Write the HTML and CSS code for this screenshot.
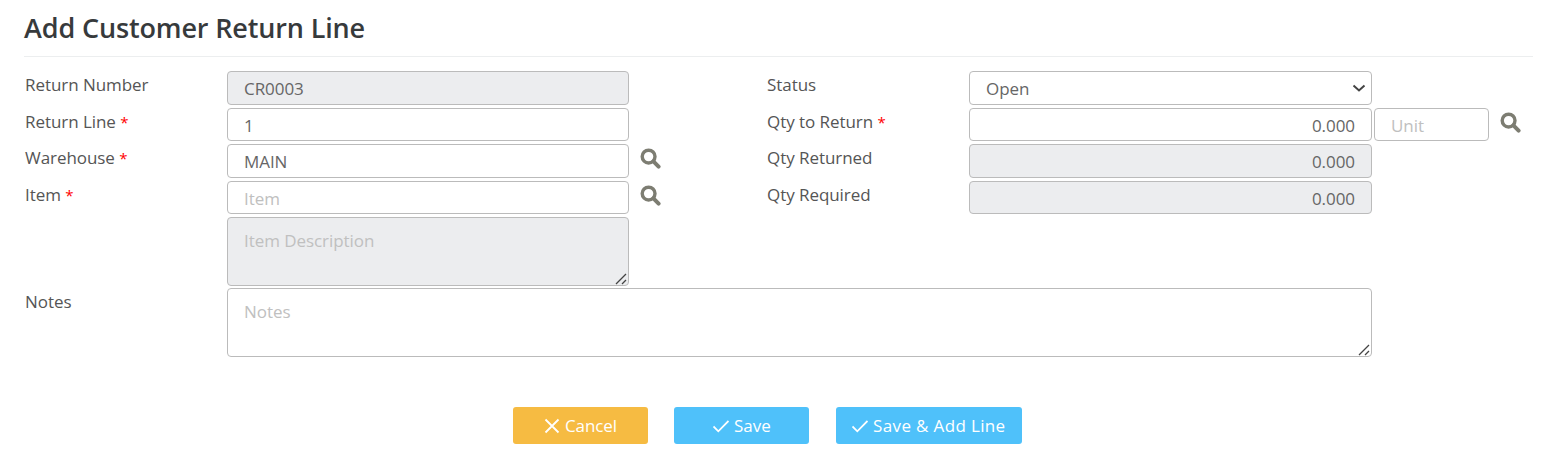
FILE: index.html
```html
<!DOCTYPE html>
<html lang="en">
<head>
<meta charset="utf-8">
<title>Add Customer Return Line</title>
<link rel="stylesheet" href="styles.css">
</head>
<body>
<svg class="defs" width="0" height="0" aria-hidden="true">
  <symbol id="search" viewBox="0 0 21 21">
    <circle cx="8.6" cy="8.6" r="6.4" fill="none" stroke="currentColor" stroke-width="3.4"/>
    <path d="M13.4 13.4l5.2 5.2" fill="none" stroke="currentColor" stroke-width="4" stroke-linecap="round"/>
  </symbol>
</svg>
<main class="page">
  <h1 class="title">Add Customer Return Line</h1>
  <form class="form">
    <div class="columns">
      <div class="col col-left">
        <div class="row"><label class="label">Return Number</label><input class="field" value="CR0003" disabled></div>
        <div class="row"><label class="label">Return Line <span class="req">*</span></label><input class="field" value="1"></div>
        <div class="row"><label class="label">Warehouse <span class="req">*</span></label><input class="field" value="MAIN"><svg class="icon"><use href="#search"/></svg></div>
        <div class="row"><label class="label">Item <span class="req">*</span></label><input class="field" placeholder="Item"><svg class="icon"><use href="#search"/></svg></div>
        <div class="row row-area"><span class="label"></span><textarea class="field area area-desc" placeholder="Item Description" disabled></textarea></div>
      </div>
      <div class="col col-right">
        <div class="row"><label class="label">Status</label><select class="field select"><option>Open</option></select></div>
        <div class="row"><label class="label">Qty to Return <span class="req">*</span></label><input class="field num" value="0.000"><input class="field unit" placeholder="Unit"><svg class="icon"><use href="#search"/></svg></div>
        <div class="row"><label class="label">Qty Returned</label><input class="field num" value="0.000" disabled></div>
        <div class="row"><label class="label">Qty Required</label><input class="field num" value="0.000" disabled></div>
      </div>
    </div>
    <div class="row row-notes"><label class="label">Notes</label><textarea class="field area area-notes" placeholder="Notes"></textarea></div>
    <div class="actions">
      <button type="button" class="btn btn-cancel"><svg class="btn-icon" viewBox="0 0 16 16"><path d="M1.500 1.500l13 13M14.500 1.500l-13 13"/></svg>Cancel</button>
      <button type="button" class="btn btn-save"><svg class="btn-icon" viewBox="0 0 16 16"><path d="M.5 8.500l4.800 4.800L15.500 3"/></svg>Save</button>
      <button type="button" class="btn btn-save btn-wide"><svg class="btn-icon" viewBox="0 0 16 16"><path d="M.5 8.500l4.800 4.800L15.500 3"/></svg>Save &amp; Add Line</button>
    </div>
  </form>
</main>
</body>
</html>
```
FILE: styles.css
```css
* { box-sizing: border-box; }
html, body { margin: 0; padding: 0; background: #fff; }
body { font-family: "Open Sans", "Liberation Sans", sans-serif; font-size: 17px; color: #555; overflow: hidden; }
.defs { position: absolute; }
.page { padding: 0 8px 0 24px; }
.title { margin: 0; height: 57px; padding-top: 9px; font-size: 27px; line-height: 37px; font-weight: 600; color: #373a3c; border-bottom: 1px solid #eceeef; letter-spacing: -0.14px; }
.form { padding-top: 14px; }
.columns { display: flex; }
.col { display: flex; flex-direction: column; gap: 3px; }
.col-left { width: 742px; }
.row { display: flex; align-items: flex-start; height: 33.5px; }
.row-area { height: 69px; }
.label { flex: 0 0 203px; padding: 2px 0 0 1px; line-height: 24px; font-size: 17px; letter-spacing: -0.06px; color: #555; }
.req { color: #f00; font-size: 15px; }
.field { width: 402px; height: 33.5px; margin: 0; padding: 2px 16px 0; border: 1px solid #bbb; border-radius: 4px; background: #fff; font: 17px/24px "Open Sans", "Liberation Sans", sans-serif; letter-spacing: -0.06px; color: #666; outline: 0; }
.field::placeholder { color: #c0c0c0; opacity: 1; }
.field:disabled { background: #ecedef; color: #666; }
.select { width: 403px; padding-left: 16px; appearance: none; background-image: url("data:image/svg+xml,%3Csvg xmlns='http://www.w3.org/2000/svg' width='14' height='8' viewBox='0 0 14 8'%3E%3Cpath d='M1.500 1.500L7 6.500l5.500-5' fill='none' stroke='%23444' stroke-width='2'/%3E%3C/svg%3E"); background-repeat: no-repeat; background-position: right 5px center; }
.num { width: 403px; text-align: right; }
.unit { width: 115px; margin-left: 2px; }
.area { display: block; padding-top: 11px; padding-bottom: 6px; resize: both; }
.area::-webkit-resizer { background: url("data:image/svg+xml,%3Csvg xmlns='http://www.w3.org/2000/svg' width='15' height='15' viewBox='0 0 15 15'%3E%3Cpath d='M3 14L13 4M9 14l4-4' fill='none' stroke='%23444' stroke-width='1.300'/%3E%3C/svg%3E") no-repeat; }
.area-desc { height: 69px; }
.row-notes { height: 68.5px; margin-top: 2px; }
.area-notes { width: 1145px; height: 68.500px; }
.icon { flex: none; width: 21px; height: 21px; margin: 4px 0 0 11px; color: #7d7d72; }
.actions { display: flex; gap: 26.4px; margin: 50.5px 0 0 489px; }
.btn { display: flex; align-items: center; justify-content: center; gap: 5px; width: 135px; height: 37px; padding: 0; border: 0; border-radius: 3px; color: #fff; font: 17px/24px "Open Sans", "Liberation Sans", sans-serif; letter-spacing: -0.06px; }
.btn-wide { width: 186px; letter-spacing: 0.35px; }
.btn-cancel { background: #f6bb42; }
.btn-save { background: #4fc1fa; }
.btn-icon { width: 16px; height: 16px; fill: none; stroke: #fff; stroke-width: 1.8; }
```
